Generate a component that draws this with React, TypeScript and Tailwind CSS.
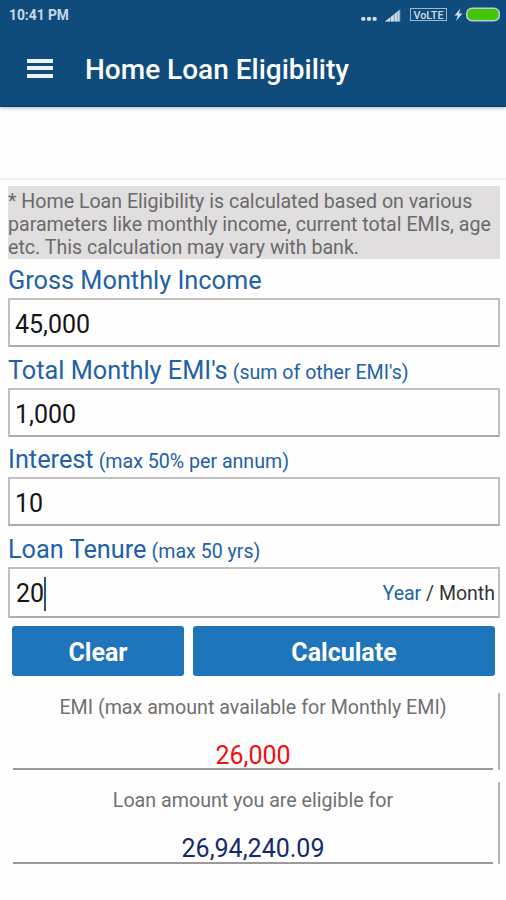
import React from "react";

function StatusBar() {
  return (
    <div className="flex h-[30px] items-center justify-between pl-[9px] pr-[6px]">
      <span className="text-[13.8px] leading-[30px] font-bold text-[#c9d7e6]">10:41 PM</span>
      <svg className="h-[30px] w-[140px]" viewBox="360 0 140 30" fill="#d3dde9">
        <rect x="361.300" y="17" width="4" height="3.800" rx="1.300" />
        <rect x="367" y="17" width="4" height="3.800" rx="1.300" />
        <rect x="372.600" y="17" width="4" height="3.800" rx="1.300" />
        <path d="M385 21.500L400.500 9V21.500Z" opacity=".35" />
        <path d="M385 21.500L390 17.500V21.500ZM390.700 17L393.800 14.500V21.500H390.700ZM394.500 14L396.900 12V21.500H394.500ZM397.500 11.500L399.500 10V21.500H397.500Z" />
        <rect x="410.500" y="8.500" width="36" height="12" fill="none" stroke="#9fb6cf" />
        <text x="413.500" y="18.500" fontSize="11" fontFamily="Roboto, sans-serif" fontWeight="500" textLength="30" lengthAdjust="spacingAndGlyphs">VoLTE</text>
        <path d="M460.500 8.500L454.500 15.500H457.800L456 21L462.500 13.500H459Z" />
        <rect x="466.700" y="8.200" width="32.600" height="12.600" rx="5.500" fill="#43c60a" stroke="#b9cdd8" strokeWidth="1.500" />
      </svg>
    </div>
  );
}

function Field({ label, hint, value, labelClass, boxClass, children }: {
  label: string; hint?: string; value: string; labelClass: string; boxClass: string; children?: React.ReactNode;
}) {
  return (
    <div>
      <div className={`flex items-baseline whitespace-nowrap text-[#2161a8] ${labelClass}`}>
        <span className="text-[25.3px]">{label}</span>
        {hint && <span className="ml-[5px] text-[19.6px]">{hint}</span>}
      </div>
      <div className={`flex items-center justify-between border-2 border-[#c0c0c0] border-b-[#acacac] pr-[3px] text-[25px] text-[#151515] ${boxClass}`}>
        <span className="flex items-center">{value}{children && <i className="h-[34px] w-[2px] bg-[#28547f]" />}</span>
        {children}
      </div>
    </div>
  );
}

function Result({ label, value, className, labelClass, valueClass }: {
  label: string; value: string; className: string; labelClass: string; valueClass: string;
}) {
  return (
    <div className={`flex border-r-2 border-[#b4b4b4] pl-[5px] pr-[5px] ${className}`}>
      <div className="flex flex-1 flex-col items-center border-b-2 border-[#999]">
        <span className={`text-[19.65px] text-[#707070] ${labelClass}`}>{label}</span>
        <span className={`mt-auto text-[25px] ${valueClass}`}>{value}</span>
      </div>
    </div>
  );
}

export default function App() {
  return (
    <div className="h-[900px] w-[506px] overflow-hidden bg-[#fefefe] font-['Roboto',sans-serif]">
      <header className="h-[107px] border-b border-[#093c69] bg-[#0f4c7b] shadow-[0_1px_4px_rgba(0,0,0,0.3)]">
        <StatusBar />
        <div className="flex h-[76px] items-center pl-[27px]">
          <div className="flex h-[19px] w-[26px] flex-col justify-between">
            <i className="h-[4px] bg-[#eef1fb]" />
            <i className="h-[4px] bg-[#eef1fb]" />
            <i className="h-[4px] bg-[#eef1fb]" />
          </div>
          <h1 className="ml-[32px] pt-[4px] text-[28px] font-medium text-white">Home Loan Eligibility</h1>
        </div>
      </header>
      <div className="h-[73px] border-b-2 border-[#f1f1f1]" />
      <main className="pl-[8px] pr-[6px] pt-[6px]">
        <p className="h-[73px] whitespace-pre bg-[#e0dedf] pt-[4px] text-[19.6px] leading-[23px] text-[#6a6a6a]">
          {"* Home Loan Eligibility is calculated based on various\nparameters like monthly income, current total EMIs, age\netc. This calculation may vary with bank."}
        </p>
        <Field label="Gross Monthly Income" value="45,000" labelClass="h-[39px] leading-[44px]" boxClass="h-[49px] pl-[5px] pt-[4px]" />
        <Field label="Total Monthly EMI's" hint="(sum of other EMI's)" value="1,000" labelClass="h-[41px] leading-[47px]" boxClass="h-[49px] pl-[5px] pt-[4px]" />
        <Field label="Interest" hint="(max 50% per annum)" value="10" labelClass="h-[40px] leading-[46px]" boxClass="h-[49px] pl-[5px] pt-[4px]" />
        <Field label="Loan Tenure" hint="(max 50 yrs)" value="20" labelClass="h-[41px] leading-[48px]" boxClass="h-[51px] pl-[6px] pt-[3px]">
          <span className="text-[19.5px] text-[#333]"><b className="font-normal text-[#2161a8]">Year</b> / Month</span>
        </Field>
        <div className="mt-[8px] flex gap-[9px] pl-[4px] pr-[5px] text-[25px] font-bold text-white">
          <button className="h-[50px] w-[172px] rounded-[3px] bg-[#1e75bb] pt-[3px]">Clear</button>
          <button className="h-[50px] flex-1 rounded-[3px] bg-[#1e75bb] pt-[3px]">Calculate</button>
        </div>
        <Result label="EMI (max amount available for Monthly EMI)" value="26,000" className="mt-[17px] h-[77px]" labelClass="leading-[30px]" valueClass="leading-[25px] text-[#f01010]" />
        <Result label="Loan amount you are eligible for" value="26,94,240.09" className="mt-[12px] h-[82px]" labelClass="leading-[38px]" valueClass="leading-[27px] text-[#142a70]" />
      </main>
    </div>
  );
}
